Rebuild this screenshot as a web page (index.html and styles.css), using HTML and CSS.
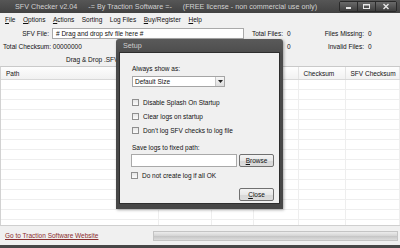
FILE: index.html
```html
<!DOCTYPE html>
<html>
<head>
  <meta charset="UTF-8">
  <title>SFV Checker v2.04</title>
  <link rel="stylesheet" href="styles.css">
</head>
<body>
  <div class="window">
    <div class="titlebar">
      <span>SFV Checker v2.04</span>
      <span>-= By Traction Software =-</span>
      <span>(FREE license - non commercial use only)</span>
      <div class="winbtns">
        <div class="winbtn"><svg width="17" height="9" viewBox="0 0 17 9"><rect x="6" y="5" width="5" height="2" fill="#e8e8e8"/></svg></div>
        <div class="winbtn"><svg width="17" height="9" viewBox="0 0 17 9"><rect x="5.5" y="2.5" width="6" height="4" fill="none" stroke="#e8e8e8"/><rect x="5.5" y="2" width="6" height="1.5" fill="#e8e8e8"/></svg></div>
        <div class="winbtn close"><svg width="20" height="9" viewBox="0 0 20 9"><path d="M7.5 2 L12.5 7 M12.5 2 L7.5 7" stroke="#e8e8e8" stroke-width="1.4"/></svg></div>
      </div>
    </div>

    <div class="menubar">
      <span><u>F</u>ile</span>
      <span><u>O</u>ptions</span>
      <span><u>A</u>ctions</span>
      <span>Sorting</span>
      <span>Log Files</span>
      <span><u>B</u>uy/Register</span>
      <span><u>H</u>elp</span>
    </div>

    <div class="info">
      <div class="lbl">SFV File:</div>
      <div class="sfv-input"># Drag and drop sfv file here #</div>
      <div class="lbl">Total Files:</div>
      <div class="val">0</div>
      <div class="lbl">Files Missing:</div>
      <div class="val">0</div>

      <div class="checksum">Total Checksum: 00000000</div>
      <div class="lbl">Good:</div>
      <div class="val">0</div>
      <div class="lbl">Invalid Files:</div>
      <div class="val">0</div>

      <div class="drop">Drag &amp; Drop .SFV file here</div>
    </div>

    <div class="grid">
      <table>
        <colgroup>
          <col style="width:157px">
          <col style="width:53px">
          <col style="width:42px">
          <col style="width:45px">
          <col style="width:47px">
          <col>
        </colgroup>
        <thead>
          <tr><th>Path</th><th></th><th></th><th></th><th>Checksum</th><th>SFV Checksum</th></tr>
        </thead>
        <tbody>
          <tr><td></td><td></td><td></td><td></td><td></td><td></td></tr>
          <tr><td></td><td></td><td></td><td></td><td></td><td></td></tr>
          <tr><td></td><td></td><td></td><td></td><td></td><td></td></tr>
          <tr><td></td><td></td><td></td><td></td><td></td><td></td></tr>
          <tr><td></td><td></td><td></td><td></td><td></td><td></td></tr>
          <tr><td></td><td></td><td></td><td></td><td></td><td></td></tr>
          <tr><td></td><td></td><td></td><td></td><td></td><td></td></tr>
          <tr><td></td><td></td><td></td><td></td><td></td><td></td></tr>
          <tr><td></td><td></td><td></td><td></td><td></td><td></td></tr>
          <tr><td></td><td></td><td></td><td></td><td></td><td></td></tr>
          <tr><td></td><td></td><td></td><td></td><td></td><td></td></tr>
          <tr><td></td><td></td><td></td><td></td><td></td><td></td></tr>
          <tr><td></td><td></td><td></td><td></td><td></td><td></td></tr>
          <tr><td></td><td></td><td></td><td></td><td></td><td></td></tr>
          <tr><td></td><td></td><td></td><td></td><td></td><td></td></tr>
        </tbody>
      </table>
    </div>

    <div class="statusbar">
      <a class="site-link" href="#">Go to Traction Software Website</a>
      <div class="progress"></div>
    </div>
    <div class="bottom-frame"></div>

    <!-- Setup dialog -->
    <div class="dialog">
      <div class="dialog-title">Setup</div>
      <div class="dialog-body">
        <div class="dlg-label">Always show as:</div>
        <div class="select">
          <span>Default Size</span>
          <div class="select-btn"><svg width="5" height="3" viewBox="0 0 5 3"><path d="M0 0 H5 L2.5 3 Z" fill="#222"/></svg></div>
        </div>
        <div class="checks">
          <div class="check"><span class="box"></span>Disable Splash On Startup</div>
          <div class="check"><span class="box"></span>Clear logs on startup</div>
          <div class="check"><span class="box"></span>Don't log SFV checks to log file</div>
        </div>
        <div class="dlg-label save-label">Save logs to fixed path:</div>
        <div class="path-row">
          <div class="path-input"></div>
          <div class="button"><u>B</u>rowse</div>
        </div>
        <div class="check ok-check"><span class="box"></span>Do not create log if all OK</div>
        <div class="close-row">
          <div class="button"><u>C</u>lose</div>
        </div>
      </div>
    </div>
  </div>
</body>
</html>
```

FILE: styles.css
```css
/* SFV Checker main window */
body {
  margin: 0;
  font-family: "Liberation Sans", Arial, sans-serif;
  font-size: 6.5px;
  color: #111;
  background: #f0f0f0;
}
.window {
  position: relative;
  width: 400px;
  height: 248px;
  overflow: hidden;
  display: flex;
  flex-direction: column;
  background: #f0f0f0;
}
.titlebar {
  height: 13px;
  flex: none;
  display: flex;
  align-items: center;
  padding-left: 15px;
  background: linear-gradient(#565656, #424242);
  color: #d2d2d2;
  font-size: 7.2px;
  white-space: nowrap;
}
.titlebar span + span {
  margin-left: 11px;
}
.winbtns {
  display: flex;
  margin-left: auto;
  margin-right: 3px;
  align-self: flex-start;
  margin-top: 1px;
  border: 1px solid #2a2a2a;
  border-radius: 2px;
}
.winbtn {
  width: 17px;
  height: 9px;
  background: linear-gradient(#6a6a6a, #3e3e3e);
  border-right: 1px solid #2a2a2a;
}
.winbtn.close {
  width: 20px;
  border-right: none;
}
.winbtn svg {
  display: block;
}
.menubar {
  height: 12px;
  flex: none;
  display: flex;
  align-items: center;
  gap: 7.5px;
  padding-left: 5px;
  background: #f0f0f0;
}
.info {
  flex: none;
  height: 38px;
  padding-top: 3px;
  display: grid;
  grid-template-columns: 52px 192px 42px 14px 67px 1fr;
  grid-template-rows: 11px 14px 12px;
  align-items: center;
  white-space: nowrap;
}
.lbl {
  text-align: right;
  padding-right: 3px;
}
.val {
  padding-left: 1px;
}
.sfv-input {
  height: 9px;
  line-height: 9px;
  border: 1px solid #a9a9a9;
  background: #fff;
  padding-left: 3px;
}
.checksum {
  grid-column: 1 / 3;
  padding-left: 3px;
}
.drop {
  grid-column: 1 / 7;
  padding-left: 66px;
}
.grid {
  flex: none;
  height: 158px;
  overflow: hidden;
  background: #fff;
  border-top: 1px solid #c9c9c9;
  border-left: 1px solid #d2d2d2;
}
.grid table {
  width: 100%;
  table-layout: fixed;
  border-collapse: collapse;
}
.grid th {
  height: 12px;
  padding: 0 0 0 5px;
  text-align: left;
  font-weight: normal;
  background: linear-gradient(#fdfdfd, #f1f1f1);
  border-bottom: 1px solid #d8d8d8;
  border-right: 1px solid #e3e3e3;
  white-space: nowrap;
  overflow: hidden;
}
.grid td {
  height: 9px;
  padding: 0;
  border-bottom: 1px solid #eeeeee;
  border-right: 1px solid #eeeeee;
}
.statusbar {
  flex: none;
  height: 19px;
  display: flex;
  align-items: center;
  border-top: 1px solid #cfcfcf;
  background: #f0f0f0;
  padding-left: 5px;
}
.site-link {
  color: #8a2c2c;
  text-decoration: underline;
}
.progress {
  margin-left: auto;
  margin-right: 2px;
  width: 243px;
  height: 8px;
  border: 1px solid #c4c4c4;
  background: linear-gradient(#ececec, #d6d6d6 45%, #c6c6c6 55%, #dcdcdc);
}
.bottom-frame {
  flex: none;
  height: 3px;
  background: #474747;
}

/* Setup dialog */
.dialog {
  position: absolute;
  left: 116px;
  top: 39px;
  width: 161px;
  height: 167px;
  padding: 0 3px 3px 3px;
  background: linear-gradient(#5a5a5a, #4a4a4a 10%, #474747);
  border-radius: 3px 3px 0 0;
  box-shadow: 1px 1px 3px rgba(0, 0, 0, 0.35);
}
.dialog-title {
  height: 13px;
  line-height: 14px;
  padding-left: 4px;
  color: #cfcfcf;
  font-size: 7.2px;
}
.dialog-body {
  height: 152px;
  border: 1px solid #2e2e2e;
  background: #f0f0f0;
  padding: 0 4px 0 12px;
  box-sizing: border-box;
}
.dlg-label {
  height: 8px;
  line-height: 8px;
  margin-top: 12px;
}
.select {
  margin-top: 3px;
  width: 93px;
  height: 11px;
  box-sizing: border-box;
  border: 1px solid #a5a5a5;
  background: #fff;
  display: flex;
  align-items: center;
  padding-left: 2px;
}
.select-btn {
  margin-left: auto;
  width: 8px;
  height: 9px;
  display: flex;
  align-items: center;
  justify-content: center;
  border-left: 1px solid #c6c6c6;
  background: linear-gradient(#f6f6f6, #dedede);
}
.checks {
  margin-top: 8px;
}
.check {
  height: 14px;
  display: flex;
  align-items: center;
}
.box {
  width: 5px;
  height: 5px;
  border: 1px solid #8f8f8f;
  background: linear-gradient(#e6e6e6, #fbfbfb);
  margin-right: 4px;
}
.save-label {
  margin-top: 7px;
}
.path-row {
  display: flex;
  gap: 2px;
  margin-top: 2px;
  margin-left: -1px;
}
.path-input {
  width: 104px;
  height: 11px;
  border: 1px solid #a9a9a9;
  background: #fff;
}
.button {
  width: 33px;
  height: 11px;
  line-height: 11px;
  text-align: center;
  border: 1px solid #707070;
  border-radius: 2px;
  background: linear-gradient(#f3f3f3, #e8e8e8 50%, #d7d7d7 51%, #dcdcdc);
}
.ok-check {
  margin-top: 1px;
  margin-left: -1px;
}
.close-row {
  display: flex;
  justify-content: flex-end;
  margin-top: 6px;
  padding-right: 1px;
}
```
